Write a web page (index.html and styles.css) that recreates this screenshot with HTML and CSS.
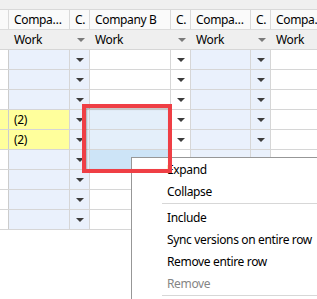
FILE: index.html
```html
<!DOCTYPE html>
<html lang="en">
<head>
    <meta charset="UTF-8">
    <title>Version grid</title>
    <link rel="stylesheet" href="styles.css">
</head>
<body>
    <div class="screen">
        <div class="topbar"></div>

        <div class="grid">
            <div class="row head">
                <div class="cell"></div>
                <div class="cell">Compa…</div>
                <div class="cell">C.</div>
                <div class="cell">Company B</div>
                <div class="cell">C.</div>
                <div class="cell">Compa…</div>
                <div class="cell">C.</div>
                <div class="cell">Compa…</div>
            </div>

            <div class="row filter">
                <div class="cell"></div>
                <div class="cell">Work</div>
                <div class="cell"><span class="arrow"></span></div>
                <div class="cell">Work</div>
                <div class="cell"><span class="arrow"></span></div>
                <div class="cell">Work</div>
                <div class="cell"><span class="arrow"></span></div>
                <div class="cell">Work</div>
            </div>

            <div class="row data">
                <div class="cell"></div><div class="cell"></div>
                <div class="cell"><span class="arrow"></span></div>
                <div class="cell"></div>
                <div class="cell"><span class="arrow"></span></div>
                <div class="cell"></div>
                <div class="cell"><span class="arrow"></span></div>
                <div class="cell"></div>
            </div>
            <div class="row data">
                <div class="cell"></div><div class="cell"></div>
                <div class="cell"><span class="arrow"></span></div>
                <div class="cell"></div>
                <div class="cell"><span class="arrow"></span></div>
                <div class="cell"></div>
                <div class="cell"><span class="arrow"></span></div>
                <div class="cell"></div>
            </div>
            <div class="row data">
                <div class="cell"></div><div class="cell"></div>
                <div class="cell"><span class="arrow"></span></div>
                <div class="cell"></div>
                <div class="cell"><span class="arrow"></span></div>
                <div class="cell"></div>
                <div class="cell"><span class="arrow"></span></div>
                <div class="cell"></div>
            </div>
            <div class="row data marked">
                <div class="cell"></div><div class="cell">(2)</div>
                <div class="cell"><span class="arrow"></span></div>
                <div class="cell sel"></div>
                <div class="cell"><span class="arrow"></span></div>
                <div class="cell"></div>
                <div class="cell"><span class="arrow"></span></div>
                <div class="cell"></div>
            </div>
            <div class="row data marked">
                <div class="cell"></div><div class="cell">(2)</div>
                <div class="cell"><span class="arrow"></span></div>
                <div class="cell sel"></div>
                <div class="cell"><span class="arrow"></span></div>
                <div class="cell"></div>
                <div class="cell"><span class="arrow"></span></div>
                <div class="cell"></div>
            </div>
            <div class="row data">
                <div class="cell"></div><div class="cell"></div>
                <div class="cell"><span class="arrow"></span></div>
                <div class="cell focus"></div>
                <div class="cell"><span class="arrow"></span></div>
                <div class="cell"></div>
                <div class="cell"><span class="arrow"></span></div>
                <div class="cell"></div>
            </div>
            <div class="row data">
                <div class="cell"></div><div class="cell"></div>
                <div class="cell"><span class="arrow"></span></div>
                <div class="cell"></div>
                <div class="cell"><span class="arrow"></span></div>
                <div class="cell"></div>
                <div class="cell"><span class="arrow"></span></div>
                <div class="cell"></div>
            </div>
            <div class="row data">
                <div class="cell"></div><div class="cell"></div>
                <div class="cell"><span class="arrow"></span></div>
                <div class="cell"></div>
                <div class="cell"><span class="arrow"></span></div>
                <div class="cell"></div>
                <div class="cell"><span class="arrow"></span></div>
                <div class="cell"></div>
            </div>
            <div class="row data">
                <div class="cell"></div><div class="cell"></div>
                <div class="cell"><span class="arrow"></span></div>
                <div class="cell"></div>
                <div class="cell"><span class="arrow"></span></div>
                <div class="cell"></div>
                <div class="cell"><span class="arrow"></span></div>
                <div class="cell"></div>
            </div>
        </div>

        <!-- context menu opened on the selected cells -->
        <div class="menu">
            <div class="item">Expand</div>
            <div class="item">Collapse</div>
            <div class="sep"></div>
            <div class="item">Include</div>
            <div class="item">Sync versions on entire row</div>
            <div class="item">Remove entire row</div>
            <div class="item disabled">Remove</div>
            <div class="sep last"></div>
        </div>

        <!-- red annotation frame -->
        <div class="mark"></div>
    </div>
</body>
</html>
```

FILE: styles.css
```css
body {
    margin: 0;
    overflow: hidden;
    background-color: white;
    font-family: "Noto Sans", "Open Sans", sans-serif;
    font-size: 12px;
    letter-spacing: -0.35px;
    color: #000;
}
.screen {
    position: relative;
    width: 317px;
    height: 299px;
    overflow: hidden;
}
.topbar {
    height: 9px;
    background-color: #f0f0f0;
    border-bottom: 1px solid #d9d9d9;
}
.grid {
    width: 331px;
}
.row {
    display: grid;
    grid-template-columns: 9px 61px 20px 81px 20px 60px 20px 60px;
    height: 20px;
    box-sizing: border-box;
    border-bottom: 1px solid #d6d6d6;
}
.cell {
    box-sizing: border-box;
    display: flex;
    align-items: center;
    padding-left: 5px;
    white-space: nowrap;
    overflow: hidden;
}
.row.head {
    background-color: #fafafa;
    border-bottom-color: #dcdcdc;
}
.row.head .cell {
    border-right: 1px solid #dadada;
}
.row.filter {
    background-color: #efefef;
    border-bottom-color: #d6d6d6;
}
.row.data .cell {
    border-right: 1px solid #d6d6d6;
}
.row.data .cell:nth-child(1) {
    border-right-color: #cccccc;
}
.row.data .cell:nth-child(2),
.row.data .cell:nth-child(3),
.row.data .cell:nth-child(6),
.row.data .cell:nth-child(7) {
    background-color: #eaf1fc;
}
.row.marked .cell:nth-child(1),
.row.marked .cell:nth-child(2) {
    background-color: #ffff9c;
}
.row.data .cell.sel {
    background-color: #e4effa;
}
.row.data .cell.focus {
    background-color: #cde4f7;
}
.row .cell:has(.arrow) {
    justify-content: center;
    padding-left: 1px;
}
.arrow {
    width: 0;
    height: 0;
    border-left: 4px solid transparent;
    border-right: 4px solid transparent;
    border-top: 4px solid #3c3c3c;
}
.row.filter .arrow {
    border-top-color: #7a7a7a;
}
.menu {
    position: absolute;
    left: 131px;
    top: 157px;
    width: 200px;
    height: 160px;
    box-sizing: border-box;
    padding-top: 1px;
    background-color: white;
    border: 1px solid #979797;
}
.item {
    height: 22px;
    line-height: 22px;
    padding-left: 35px;
    white-space: nowrap;
}
.item.disabled {
    color: #858585;
}
.sep {
    height: 1px;
    margin: 0 0 3px 30px;
    background-color: #d7d7d7;
}
.sep.last {
    margin-bottom: 0;
}
.mark {
    position: absolute;
    left: 82px;
    top: 104px;
    width: 90px;
    height: 69px;
    box-sizing: border-box;
    border: 4px solid #ef3f45;
    box-shadow: inset 1px 1px 2px rgba(0, 0, 0, 0.3);
    pointer-events: none;
}
```
